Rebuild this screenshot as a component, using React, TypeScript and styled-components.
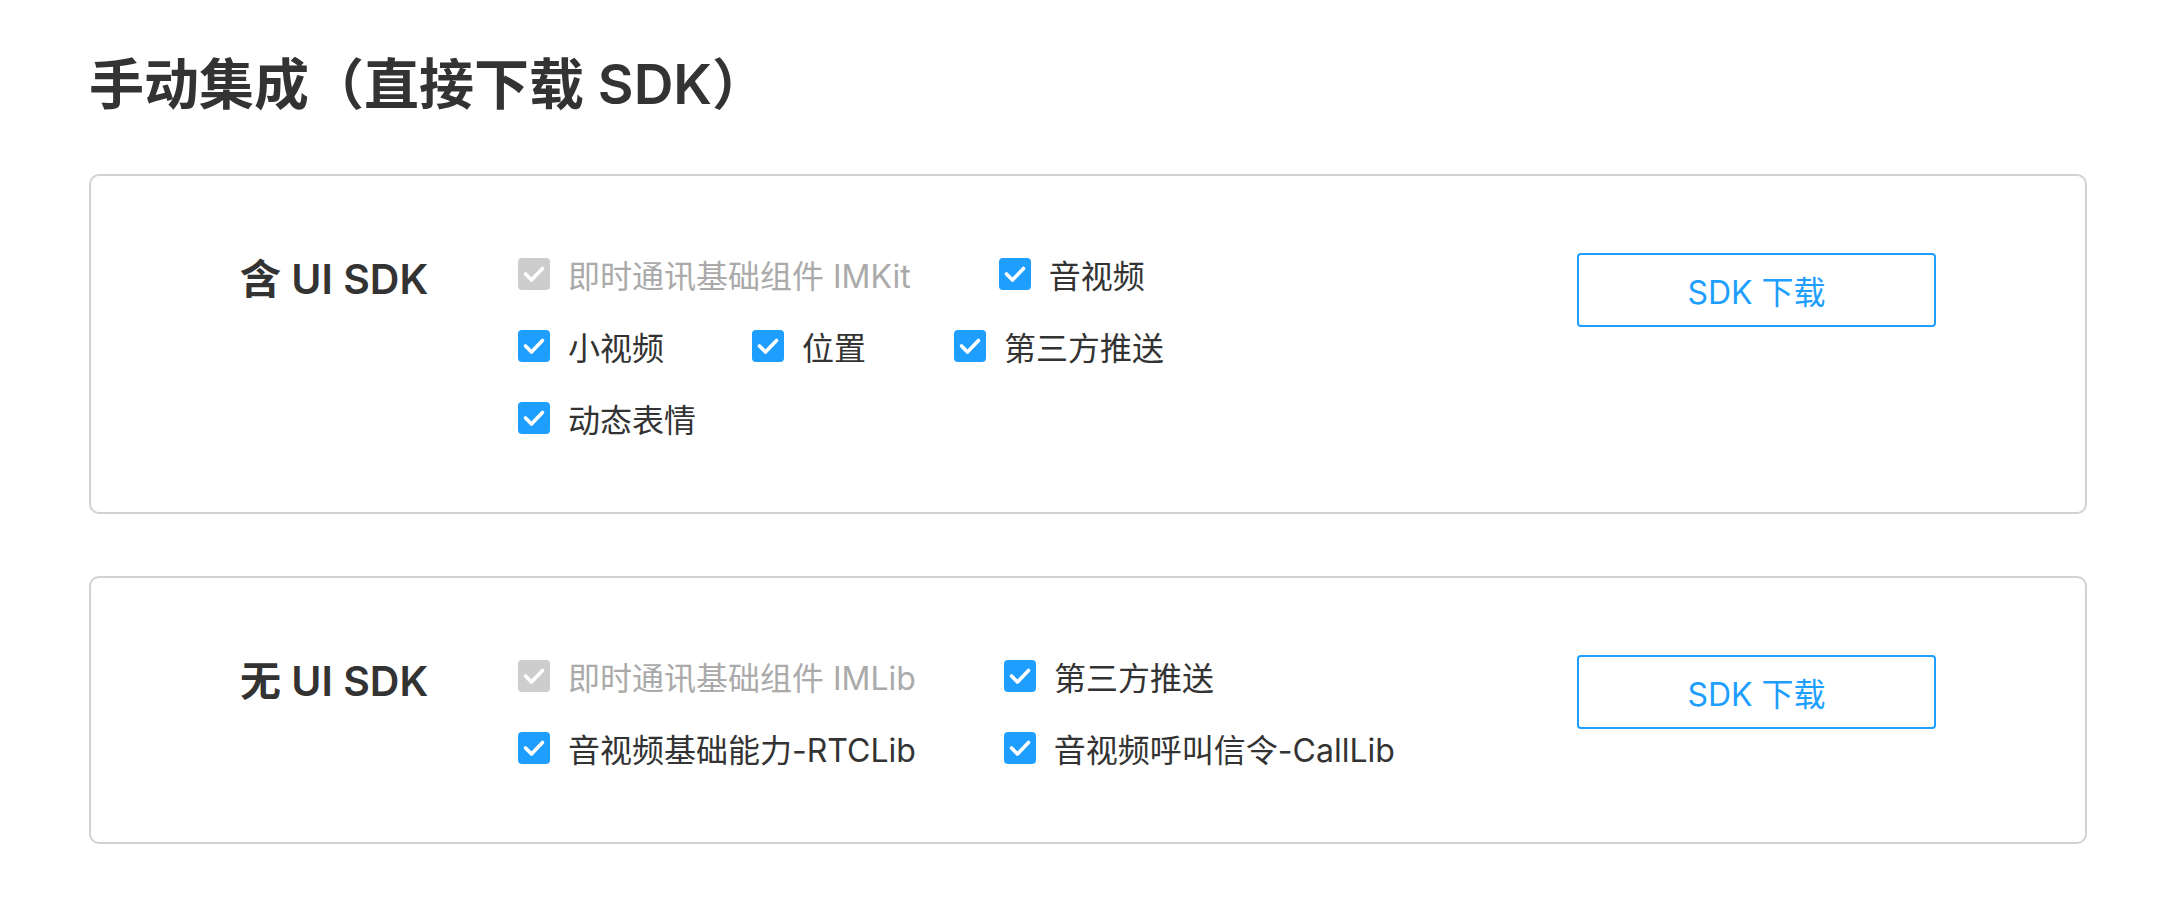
import React from 'react';
import styled, { createGlobalStyle } from 'styled-components';

const GlobalStyle = createGlobalStyle`
  html, body {
    margin: 0;
    padding: 0;
    background: #ffffff;
  }
  body {
    font-family: "Inter", "Noto Sans CJK SC", sans-serif;
    color: #333333;
  }
`;

const Page = styled.div`
  padding: 48px 91px 40px 89px;
`;

const Title = styled.h1`
  margin: 0 0 54px 0;
  font-size: 55px;
  line-height: 72px;
  font-weight: 600;
  color: #333333;
  letter-spacing: 0;
`;

const Cards = styled.div`
  display: flex;
  flex-direction: column;
  gap: 62px;
`;

const Card = styled.section`
  display: flex;
  align-items: flex-start;
  border: 2px solid #d2d2d2;
  border-radius: 10px;
  padding: 62px 149px 58px 149px;
`;

const SectionLabel = styled.div`
  width: 278px;
  flex-shrink: 0;
  padding-top: 5px;
  font-size: 41px;
  line-height: 72px;
  font-weight: 600;
  color: #333333;
`;

const Options = styled.div`
  display: flex;
  flex-direction: column;
`;

const OptionRow = styled.div`
  display: flex;
  gap: 88px;
`;

const Option = styled.label<{ $disabled?: boolean }>`
  display: flex;
  align-items: center;
  gap: 18px;
  height: 72px;
  font-size: 32px;
  color: ${({ $disabled }) => ($disabled ? '#aaaaaa' : '#333333')};
  white-space: nowrap;
  cursor: ${({ $disabled }) => ($disabled ? 'default' : 'pointer')};
`;

const Box = styled.span<{ $disabled?: boolean }>`
  width: 32px;
  height: 32px;
  border-radius: 4px;
  background: ${({ $disabled }) => ($disabled ? '#cdcdcd' : '#1e9fff')};
  display: flex;
  align-items: center;
  justify-content: center;
  flex-shrink: 0;
  svg {
    width: 32px;
    height: 32px;
  }
`;

const DownloadButton = styled.button`
  margin-left: auto;
  margin-top: 15px;
  width: 359px;
  height: 74px;
  box-sizing: border-box;
  border: 2px solid #1e9fff;
  border-radius: 4px;
  background: #ffffff;
  color: #1e9fff;
  font-family: "Inter", "Noto Sans CJK SC", sans-serif;
  font-size: 32px;
  font-weight: 400;
  cursor: pointer;
  padding: 0;
`;

type Item = { text: string; disabled?: boolean };

const Check: React.FC<Item> = ({ text, disabled }) => (
  <Option $disabled={disabled}>
    <Box $disabled={disabled}>
      <svg viewBox="0 0 32 32" fill="none">
        <polyline
          points="7.5,16 13.5,22 24.5,10.5"
          stroke="#ffffff"
          strokeWidth="3.6"
          strokeLinecap="round"
          strokeLinejoin="round"
        />
      </svg>
    </Box>
    {text}
  </Option>
);

const sections: { label: string; rows: Item[][] }[] = [
  {
    label: '含 UI SDK',
    rows: [
      [{ text: '即时通讯基础组件 IMKit', disabled: true }, { text: '音视频' }],
      [{ text: '小视频' }, { text: '位置' }, { text: '第三方推送' }],
      [{ text: '动态表情' }],
    ],
  },
  {
    label: '无 UI SDK',
    rows: [
      [{ text: '即时通讯基础组件 IMLib', disabled: true }, { text: '第三方推送' }],
      [{ text: '音视频基础能力-RTCLib' }, { text: '音视频呼叫信令-CallLib' }],
    ],
  },
];

export default function App() {
  return (
    <>
      <GlobalStyle />
      <Page>
        <Title>手动集成（直接下载 SDK）</Title>
        <Cards>
          {sections.map((s) => (
            <Card key={s.label}>
              <SectionLabel>{s.label}</SectionLabel>
              <Options>
                {s.rows.map((row, i) => (
                  <OptionRow key={i}>
                    {row.map((item) => (
                      <Check key={item.text} {...item} />
                    ))}
                  </OptionRow>
                ))}
              </Options>
              <DownloadButton>SDK 下载</DownloadButton>
            </Card>
          ))}
        </Cards>
      </Page>
    </>
  );
}
